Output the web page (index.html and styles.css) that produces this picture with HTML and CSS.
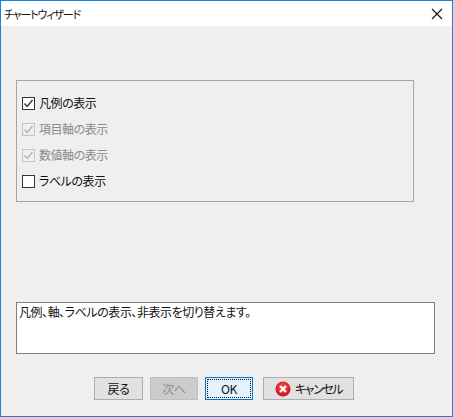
FILE: index.html
```html
<!DOCTYPE html>
<html lang="ja">
<head>
  <meta charset="UTF-8" />
  <title>チャートウィザード</title>
  <link rel="stylesheet" href="styles.css">
</head>
<body>
  <div class="window">
    <div class="title-bar">
      <span class="title">チャートウィザード</span>
      <svg class="close" width="12" height="12" viewBox="0 0 12 12">
        <path d="M1 1L11 11M11 1L1 11" stroke="#111" stroke-width="1.1" fill="none" />
      </svg>
    </div>
    <div class="content">
      <div class="group">
        <div class="check-row">
          <span class="box">
            <svg width="13" height="13" viewBox="0 0 13 13"><path d="M2.5 6.5L5.2 9.5L10.5 3" stroke="#333" stroke-width="1.4" fill="none" /></svg>
          </span>
          <span>凡例の表示</span>
        </div>
        <div class="check-row disabled">
          <span class="box">
            <svg width="13" height="13" viewBox="0 0 13 13"><path d="M2.5 6.5L5.2 9.5L10.5 3" stroke="#b5b5b5" stroke-width="1.4" fill="none" /></svg>
          </span>
          <span>項目軸の表示</span>
        </div>
        <div class="check-row disabled">
          <span class="box">
            <svg width="13" height="13" viewBox="0 0 13 13"><path d="M2.5 6.5L5.2 9.5L10.5 3" stroke="#b5b5b5" stroke-width="1.4" fill="none" /></svg>
          </span>
          <span>数値軸の表示</span>
        </div>
        <div class="check-row">
          <span class="box"></span>
          <span>ラベルの表示</span>
        </div>
      </div>
      <div class="description">凡例、軸、ラベルの表示、非表示を切り替えます。</div>
      <div class="buttons">
        <div class="btn btn-back">戻る</div>
        <div class="btn btn-next">次へ</div>
        <div class="btn btn-ok"><span class="focus">OK</span></div>
        <div class="btn btn-cancel">
          <svg width="16" height="16" viewBox="0 0 16 16">
            <defs>
              <radialGradient id="red" cx="50%" cy="40%" r="60%">
                <stop offset="0" stop-color="#f66" />
                <stop offset="0.7" stop-color="#e01b24" />
                <stop offset="1" stop-color="#c8141c" />
              </radialGradient>
            </defs>
            <circle cx="8" cy="8" r="7.5" fill="url(#red)" />
            <path d="M5 5L11 11M11 5L5 11" stroke="#fff" stroke-width="2.2" fill="none" />
          </svg>
          <span class="cancel-label">キャンセル</span>
        </div>
      </div>
    </div>
  </div>
</body>
</html>
```

FILE: styles.css
```css
* {
  box-sizing: border-box;
  margin: 0;
  padding: 0;
}
body {
  width: 453px;
  height: 417px;
  overflow: hidden;
  font-family: "Noto Sans CJK JP", "Liberation Sans", sans-serif;
  font-size: 12px;
  font-feature-settings: "palt";
  letter-spacing: -0.45px;
  color: #111;
}
.window {
  width: 453px;
  height: 417px;
  display: flex;
  flex-direction: column;
  border: 1px solid #1883d7;
  background: #efefef;
}
.title-bar {
  height: 25px;
  flex-shrink: 0;
  display: flex;
  align-items: center;
  justify-content: space-between;
  padding: 0 9px 0 3px;
  background: #fff;
}
.title {
  font-size: 11px;
  letter-spacing: -1.2px;
}
.content {
  flex: 1;
  padding: 54px 17px 0 15px;
}
.group {
  width: 398px;
  height: 122px;
  padding-top: 8px;
  border: 1px solid #a5a5a5;
}
.check-row {
  height: 26px;
  display: flex;
  align-items: center;
  gap: 4px;
  padding-left: 5px;
}
.box {
  width: 13px;
  height: 13px;
  margin-top: 2px;
  flex-shrink: 0;
  display: flex;
  border: 1px solid #333;
  background: #fff;
}
.box svg {
  flex-shrink: 0;
  margin: -1px;
}
.disabled {
  color: #8a8a8a;
}
.disabled .box {
  border-color: #c4c4c4;
  background: #efefef;
}
.description {
  width: 419px;
  height: 52px;
  margin-top: 100px;
  padding: 1px 2px;
  border: 1px solid #7a7f94;
  background: #fff;
  line-height: 16px;
}
.buttons {
  display: flex;
  margin-top: 23px;
  padding-left: 78px;
}
.btn {
  height: 23px;
  display: flex;
  align-items: center;
  justify-content: center;
  border: 1px solid #adadad;
  background: #e1e1e1;
}
.btn-back {
  width: 49px;
  margin-right: 7px;
}
.btn-next {
  width: 48px;
  margin-right: 7px;
  border-color: #bfbfbf;
  background: #cccccc;
  color: #8f8f8f;
}
.btn-ok {
  width: 48px;
  margin-right: 10px;
  padding: 1px;
  border-color: #0078d7;
  background: #e5f1fb;
}
.focus {
  width: 100%;
  height: 100%;
  display: flex;
  align-items: center;
  justify-content: center;
  border: 1px dotted #111;
}
.btn-cancel {
  width: 91px;
  gap: 4px;
}
.cancel-label {
  letter-spacing: -1.4px;
}
```
